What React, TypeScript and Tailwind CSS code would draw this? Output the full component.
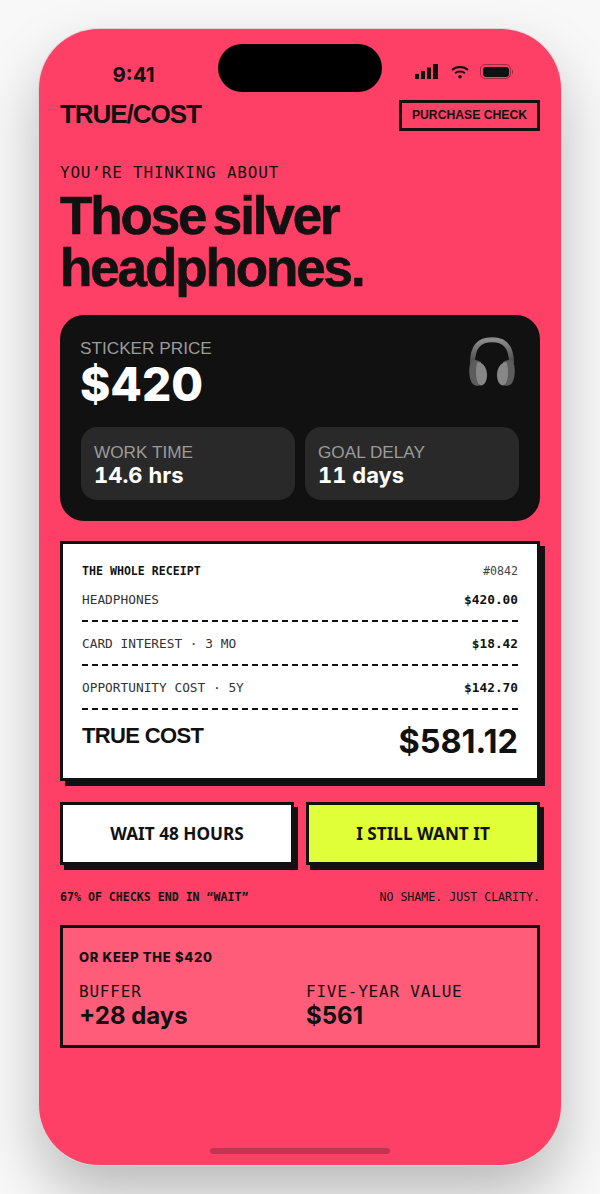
const sans = "font-['Liberation_Sans',Arial,sans-serif]";
const num = "font-['Inter',sans-serif]";
const mono = "font-['DejaVu_Sans_Mono',monospace]";

function Headphones() {
  return (
    <svg width="46" height="50" viewBox="0 0 46 50" fill="none">
      <defs>
        <linearGradient id="hb" x1="0" y1="0" x2="0" y2="1">
          <stop offset="0" stopColor="#8c8c8c" />
          <stop offset="1" stopColor="#4a4a4a" />
        </linearGradient>
      </defs>
      <path d="M3.500 26 C3.500 9 11 2.800 23 2.800 C35 2.800 42.500 9 42.500 26" stroke="url(#hb)" strokeWidth="5" fill="none" />
      <path d="M2 24 C-0.500 30 -0.500 41 3 46 C5 49 10 49.500 12 48 L12 25 C9 23 4 22 2 24Z" fill="#5c5c5c" />
      <path d="M44 24 C46.500 30 46.500 41 43 46 C41 49 36 49.500 34 48 L34 25 C37 23 42 22 44 24Z" fill="#5c5c5c" />
      <path d="M9 25 C14 25.500 18 31 18 38 C18 43 16 48 12.500 48.500 C8.500 48 7 42 7 36 C7 31 7.500 26 9 25Z" fill="#878787" />
      <path d="M37 25 C32 25.500 28 31 28 38 C28 43 30 48 33.500 48.500 C37.500 48 39 42 39 36 C39 31 38.500 26 37 25Z" fill="#878787" />
    </svg>
  );
}

function StatTile({ label, value }: { label: string; value: string }) {
  return (
    <div className="flex h-[73px] flex-col rounded-2xl bg-[#292929] px-[13px] pt-[15px]">
      <span className="text-[17.200px] leading-[20px] text-[#9b9b9b]">{label}</span>
      <span className={`text-[22px] leading-[26px] font-bold text-white tabular-nums ${num}`}>{value}</span>
    </div>
  );
}

function ReceiptLine({ label, value, first = false }: { label: string; value: string; first?: boolean }) {
  return (
    <div className={`flex items-center justify-between border-b-2 border-dashed border-[#111] text-[12.800px] leading-[18px] ${first ? "h-[42px]" : "h-[44px] pt-[1px]"}`}>
      <span className="text-[#333]">{label}</span>
      <span className="font-bold text-[#111]">{value}</span>
    </div>
  );
}

export default function App() {
  return (
    <div className={`flex h-[1194px] w-[600px] justify-center overflow-hidden bg-[#f8f8f8] pt-[29px] ${sans}`}>
      <div className="relative flex h-[1136px] w-[522px] flex-col rounded-[60px] bg-[#ff4066] px-[21px] text-[#111] shadow-[0_0_0_1px_#d8d8d8,0_30px_60px_rgba(0,0,0,0.25)]">
        <div className="absolute top-[15px] left-[179px] h-[48px] w-[164px] rounded-[24px] bg-black" />

        <div className="flex h-[71px] items-end justify-between pb-[12px]">
          <span className="ml-[52.500px] font-['Inter',sans-serif] text-[20.500px] leading-[26px] font-bold">9:41</span>
          <div className="mr-[27px] mb-[9px] flex items-center">
            <svg width="23" height="15" viewBox="0 0 23 15" className="mr-[13px]">
              <rect x="0" y="10" width="4" height="5" fill="#111" />
              <rect x="6" y="7" width="4" height="8" fill="#111" />
              <rect x="12" y="3.500" width="4" height="11.500" fill="#111" />
              <rect x="18" y="0" width="5" height="15" fill="#111" />
            </svg>
            <svg width="18" height="14" viewBox="0 0 18 14" fill="none" className="mr-[11px]">
              <path d="M1 5 C5.500 1 12.500 1 17 5" stroke="#111" strokeWidth="2" />
              <path d="M4 8.300 C6.800 6 11.200 6 14 8.300" stroke="#111" strokeWidth="2" />
              <circle cx="9" cy="11.800" r="1.800" fill="#111" />
            </svg>
            <div className="flex h-[15px] w-[31px] items-center justify-center rounded-[5px] border border-[rgba(17,17,17,0.4)] p-[1.500px]">
              <div className="h-full w-full rounded-[3px] bg-[#111]" />
            </div>
            <div className="ml-[1px] h-[4px] w-[1px] bg-[rgba(17,17,17,0.4)]" />
          </div>
        </div>

        <header className="flex h-[31px] items-center justify-between">
          <span className="mt-[-2px] text-[26px] leading-[31px] font-bold tracking-[-0.04em]">TRUE/COST</span>
          <span className="flex h-[31px] w-[141px] items-center justify-center border-[3px] border-[#111] text-[12.200px] leading-none font-bold">PURCHASE CHECK</span>
        </header>

        <p className={`mt-[31px] text-[16px] leading-[22px] tracking-[0.05em] ${mono}`}>YOU’RE THINKING ABOUT</p>
        <h1 className="mt-[6px] text-[53px] leading-[52px] font-bold tracking-[-0.04em] [word-spacing:-0.1em] [-webkit-text-stroke:0.6px_#111]">
          Those silver
          <br />
          headphones.
        </h1>

        <section className="mt-[21px] h-[206px] rounded-[24px] bg-[#111] px-[21px] pt-[23px]">
          <div className="flex h-[89px] justify-between">
            <div className="flex flex-col">
              <span className="ml-[-1px] text-[17.200px] leading-[20px] text-[#9b9b9b]">STICKER PRICE</span>
              <span className={`mt-[1px] ml-[-1px] text-[46px] leading-[50px] font-extrabold text-white ${num}`}>$420</span>
            </div>
            <div className="mt-[-1px] mr-[4px]">
              <Headphones />
            </div>
          </div>
          <div className="grid grid-cols-2 gap-[10px]">
            <StatTile label="WORK TIME" value="14.6 hrs" />
            <StatTile label="GOAL DELAY" value="11 days" />
          </div>
        </section>

        <section className={`mt-[20px] h-[240px] border-[3px] border-[#111] bg-white px-[19px] pt-[19px] shadow-[5px_5px_0_#111] ${mono}`}>
          <div className="flex items-center justify-between text-[11.600px] leading-[17px]">
            <span className="font-bold text-[#111]">THE WHOLE RECEIPT</span>
            <span className="text-[#444]">#0842</span>
          </div>
          <ReceiptLine first label="HEADPHONES" value="$420.00" />
          <ReceiptLine label="CARD INTEREST · 3 MO" value="$18.42" />
          <ReceiptLine label="OPPORTUNITY COST · 5Y" value="$142.70" />
          <div className={`mt-[13px] flex items-start justify-between ${sans}`}>
            <span className="text-[22px] leading-[26px] font-bold tracking-[-0.03em]">TRUE COST</span>
            <span className={`mt-[1px] text-[32.500px] leading-[36px] font-bold ${num}`}>$581.12</span>
          </div>
        </section>

        <div className="mt-[21px] grid grid-cols-2 gap-[12px]">
          <button className="h-[63px] border-[3px] border-[#111] bg-white font-['Noto_Sans',sans-serif] text-[17.200px] font-bold text-[#111] shadow-[4px_5px_0_#111]">WAIT 48 HOURS</button>
          <button className="h-[63px] border-[3px] border-[#111] bg-[#e0ff38] font-['Noto_Sans',sans-serif] text-[17.200px] font-bold text-[#111] shadow-[4px_5px_0_#111]">I STILL WANT IT</button>
        </div>

        <div className={`mt-[24px] flex h-[16px] items-center justify-between text-[11.600px] leading-[16px] ${mono}`}>
          <span className="font-bold">67% OF CHECKS END IN “WAIT”</span>
          <span>NO SHAME. JUST CLARITY.</span>
        </div>

        <section className="mt-[20px] h-[123px] border-[3px] border-[#111] bg-[#ff5c7a] px-[16px] pt-[21px]">
          <p className={`text-[13px] leading-[16px] font-extrabold tracking-[0.7px] ${num}`}>OR KEEP THE $420</p>
          <div className="mt-[16px] grid grid-cols-2 gap-[12px]">
            <div className="flex flex-col">
              <span className={`text-[16px] leading-[22px] tracking-[0.05em] ${mono}`}>BUFFER</span>
              <span className={`mt-[-1px] text-[24px] leading-[27px] font-bold ${num}`}>+28 days</span>
            </div>
            <div className="flex flex-col">
              <span className={`text-[16px] leading-[22px] tracking-[0.05em] ${mono}`}>FIVE-YEAR VALUE</span>
              <span className={`mt-[-1px] text-[24px] leading-[27px] font-bold ${num}`}>$561</span>
            </div>
          </div>
        </section>

        <div className="absolute bottom-[11px] left-[171px] h-[6px] w-[180px] rounded-[3px] bg-[rgba(17,17,17,0.25)]" />
      </div>
    </div>
  );
}
